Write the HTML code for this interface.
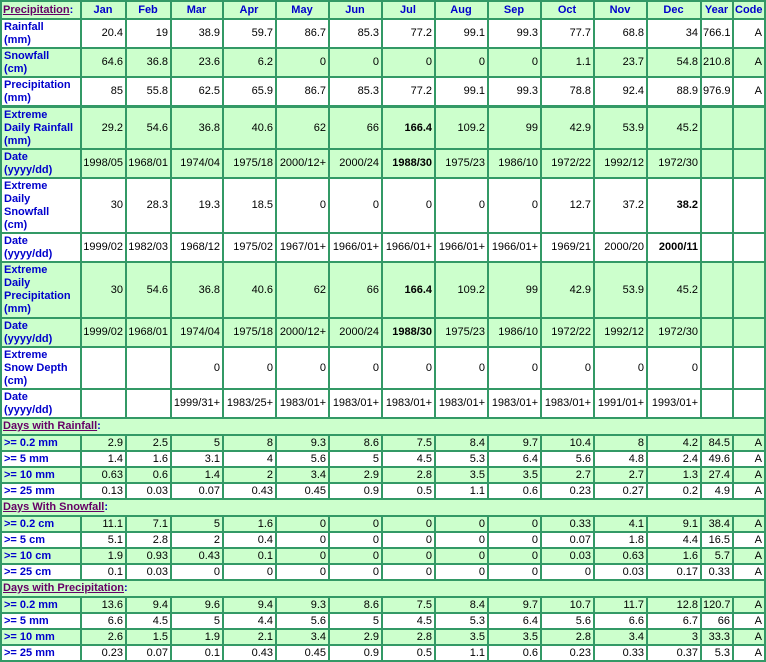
<!DOCTYPE html>
<html><head><style>
body{margin:0;background:#fff;}
table{border-collapse:separate;border-spacing:0;table-layout:fixed;width:766px;font-family:"Liberation Sans",Arial,sans-serif;font-size:11px;border-top:2px solid #339966;border-left:2px solid #339966;}
td,th{border-right:2px solid #339966;border-bottom:2px solid #339966;padding:0 2px 0 1px;text-align:right;color:#000;overflow:hidden;white-space:nowrap;line-height:13px;}
th{color:#0000cc;font-weight:bold;text-align:center;}
td.l{color:#0000cc;font-weight:bold;text-align:left;line-height:13px;padding-left:2px;}
tr.g td,tr.g th{background:#ccffcc;}
.u{color:#660066;text-decoration:underline;}
tr.s td{text-align:left;font-weight:bold;color:#0000cc;background:#ccffcc;}
tr.thick td{border-top:1px solid #339966;}
tr.h16 td{height:14px;line-height:13px;}
</style></head><body>
<table>
<colgroup><col style="width:80px"><col style="width:45px"><col style="width:45px"><col style="width:52px"><col style="width:53px"><col style="width:53px"><col style="width:53px"><col style="width:53px"><col style="width:53px"><col style="width:53px"><col style="width:53px"><col style="width:53px"><col style="width:54px"><col style="width:32px"><col style="width:32px"></colgroup>
<tr class="g" style="height:18px"><th style="text-align:left"><span class="u">Precipitation</span>:</th><th>Jan</th><th>Feb</th><th>Mar</th><th>Apr</th><th>May</th><th>Jun</th><th>Jul</th><th>Aug</th><th>Sep</th><th>Oct</th><th>Nov</th><th>Dec</th><th>Year</th><th>Code</th></tr>
<tr style="height:29px"><td class="l">Rainfall<br>(mm)</td><td>20.4</td><td>19</td><td>38.9</td><td>59.7</td><td>86.7</td><td>85.3</td><td>77.2</td><td>99.1</td><td>99.3</td><td>77.7</td><td>68.8</td><td>34</td><td>766.1</td><td>A</td></tr>
<tr class="g" style="height:29px"><td class="l">Snowfall<br>(cm)</td><td>64.6</td><td>36.8</td><td>23.6</td><td>6.2</td><td>0</td><td>0</td><td>0</td><td>0</td><td>0</td><td>1.1</td><td>23.7</td><td>54.8</td><td>210.8</td><td>A</td></tr>
<tr style="height:29px"><td class="l">Precipitation<br>(mm)</td><td>85</td><td>55.8</td><td>62.5</td><td>65.9</td><td>86.7</td><td>85.3</td><td>77.2</td><td>99.1</td><td>99.3</td><td>78.8</td><td>92.4</td><td>88.9</td><td>976.9</td><td>A</td></tr>
<tr class="g thick" style="height:43px"><td class="l">Extreme<br>Daily Rainfall<br>(mm)</td><td>29.2</td><td>54.6</td><td>36.8</td><td>40.6</td><td>62</td><td>66</td><td><b>166.4</b></td><td>109.2</td><td>99</td><td>42.9</td><td>53.9</td><td>45.2</td><td></td><td></td></tr>
<tr class="g" style="height:29px"><td class="l">Date<br>(yyyy/dd)</td><td>1998/05</td><td>1968/01</td><td>1974/04</td><td>1975/18</td><td>2000/12+</td><td>2000/24</td><td><b>1988/30</b></td><td>1975/23</td><td>1986/10</td><td>1972/22</td><td>1992/12</td><td>1972/30</td><td></td><td></td></tr>
<tr style="height:55px"><td class="l">Extreme<br>Daily<br>Snowfall<br>(cm)</td><td>30</td><td>28.3</td><td>19.3</td><td>18.5</td><td>0</td><td>0</td><td>0</td><td>0</td><td>0</td><td>12.7</td><td>37.2</td><td><b>38.2</b></td><td></td><td></td></tr>
<tr style="height:29px"><td class="l">Date<br>(yyyy/dd)</td><td>1999/02</td><td>1982/03</td><td>1968/12</td><td>1975/02</td><td>1967/01+</td><td>1966/01+</td><td>1966/01+</td><td>1966/01+</td><td>1966/01+</td><td>1969/21</td><td>2000/20</td><td><b>2000/11</b></td><td></td><td></td></tr>
<tr class="g" style="height:56px"><td class="l">Extreme<br>Daily<br>Precipitation<br>(mm)</td><td>30</td><td>54.6</td><td>36.8</td><td>40.6</td><td>62</td><td>66</td><td><b>166.4</b></td><td>109.2</td><td>99</td><td>42.9</td><td>53.9</td><td>45.2</td><td></td><td></td></tr>
<tr class="g" style="height:29px"><td class="l">Date<br>(yyyy/dd)</td><td>1999/02</td><td>1968/01</td><td>1974/04</td><td>1975/18</td><td>2000/12+</td><td>2000/24</td><td><b>1988/30</b></td><td>1975/23</td><td>1986/10</td><td>1972/22</td><td>1992/12</td><td>1972/30</td><td></td><td></td></tr>
<tr style="height:42px"><td class="l">Extreme<br>Snow Depth<br>(cm)</td><td></td><td></td><td>0</td><td>0</td><td>0</td><td>0</td><td>0</td><td>0</td><td>0</td><td>0</td><td>0</td><td>0</td><td></td><td></td></tr>
<tr style="height:29px"><td class="l">Date<br>(yyyy/dd)</td><td></td><td></td><td>1999/31+</td><td>1983/25+</td><td>1983/01+</td><td>1983/01+</td><td>1983/01+</td><td>1983/01+</td><td>1983/01+</td><td>1983/01+</td><td>1991/01+</td><td>1993/01+</td><td></td><td></td></tr>
<tr class="s" style="height:17px"><td colspan="15"><span class="u">Days with Rainfall</span>:</td></tr>
<tr class="g h16"><td class="l">&gt;= 0.2 mm</td><td>2.9</td><td>2.5</td><td>5</td><td>8</td><td>9.3</td><td>8.6</td><td>7.5</td><td>8.4</td><td>9.7</td><td>10.4</td><td>8</td><td>4.2</td><td>84.5</td><td>A</td></tr>
<tr class="h16"><td class="l">&gt;= 5 mm</td><td>1.4</td><td>1.6</td><td>3.1</td><td>4</td><td>5.6</td><td>5</td><td>4.5</td><td>5.3</td><td>6.4</td><td>5.6</td><td>4.8</td><td>2.4</td><td>49.6</td><td>A</td></tr>
<tr class="g h16"><td class="l">&gt;= 10 mm</td><td>0.63</td><td>0.6</td><td>1.4</td><td>2</td><td>3.4</td><td>2.9</td><td>2.8</td><td>3.5</td><td>3.5</td><td>2.7</td><td>2.7</td><td>1.3</td><td>27.4</td><td>A</td></tr>
<tr class="h16"><td class="l">&gt;= 25 mm</td><td>0.13</td><td>0.03</td><td>0.07</td><td>0.43</td><td>0.45</td><td>0.9</td><td>0.5</td><td>1.1</td><td>0.6</td><td>0.23</td><td>0.27</td><td>0.2</td><td>4.9</td><td>A</td></tr>
<tr class="s" style="height:17px"><td colspan="15"><span class="u">Days With Snowfall</span>:</td></tr>
<tr class="g h16"><td class="l">&gt;= 0.2 cm</td><td>11.1</td><td>7.1</td><td>5</td><td>1.6</td><td>0</td><td>0</td><td>0</td><td>0</td><td>0</td><td>0.33</td><td>4.1</td><td>9.1</td><td>38.4</td><td>A</td></tr>
<tr class="h16"><td class="l">&gt;= 5 cm</td><td>5.1</td><td>2.8</td><td>2</td><td>0.4</td><td>0</td><td>0</td><td>0</td><td>0</td><td>0</td><td>0.07</td><td>1.8</td><td>4.4</td><td>16.5</td><td>A</td></tr>
<tr class="g h16"><td class="l">&gt;= 10 cm</td><td>1.9</td><td>0.93</td><td>0.43</td><td>0.1</td><td>0</td><td>0</td><td>0</td><td>0</td><td>0</td><td>0.03</td><td>0.63</td><td>1.6</td><td>5.7</td><td>A</td></tr>
<tr class="h16"><td class="l">&gt;= 25 cm</td><td>0.1</td><td>0.03</td><td>0</td><td>0</td><td>0</td><td>0</td><td>0</td><td>0</td><td>0</td><td>0</td><td>0.03</td><td>0.17</td><td>0.33</td><td>A</td></tr>
<tr class="s" style="height:17px"><td colspan="15"><span class="u">Days with Precipitation</span>:</td></tr>
<tr class="g h16"><td class="l">&gt;= 0.2 mm</td><td>13.6</td><td>9.4</td><td>9.6</td><td>9.4</td><td>9.3</td><td>8.6</td><td>7.5</td><td>8.4</td><td>9.7</td><td>10.7</td><td>11.7</td><td>12.8</td><td>120.7</td><td>A</td></tr>
<tr class="h16"><td class="l">&gt;= 5 mm</td><td>6.6</td><td>4.5</td><td>5</td><td>4.4</td><td>5.6</td><td>5</td><td>4.5</td><td>5.3</td><td>6.4</td><td>5.6</td><td>6.6</td><td>6.7</td><td>66</td><td>A</td></tr>
<tr class="g h16"><td class="l">&gt;= 10 mm</td><td>2.6</td><td>1.5</td><td>1.9</td><td>2.1</td><td>3.4</td><td>2.9</td><td>2.8</td><td>3.5</td><td>3.5</td><td>2.8</td><td>3.4</td><td>3</td><td>33.3</td><td>A</td></tr>
<tr class="h16"><td class="l">&gt;= 25 mm</td><td>0.23</td><td>0.07</td><td>0.1</td><td>0.43</td><td>0.45</td><td>0.9</td><td>0.5</td><td>1.1</td><td>0.6</td><td>0.23</td><td>0.33</td><td>0.37</td><td>5.3</td><td>A</td></tr>
</table>
</body></html>
